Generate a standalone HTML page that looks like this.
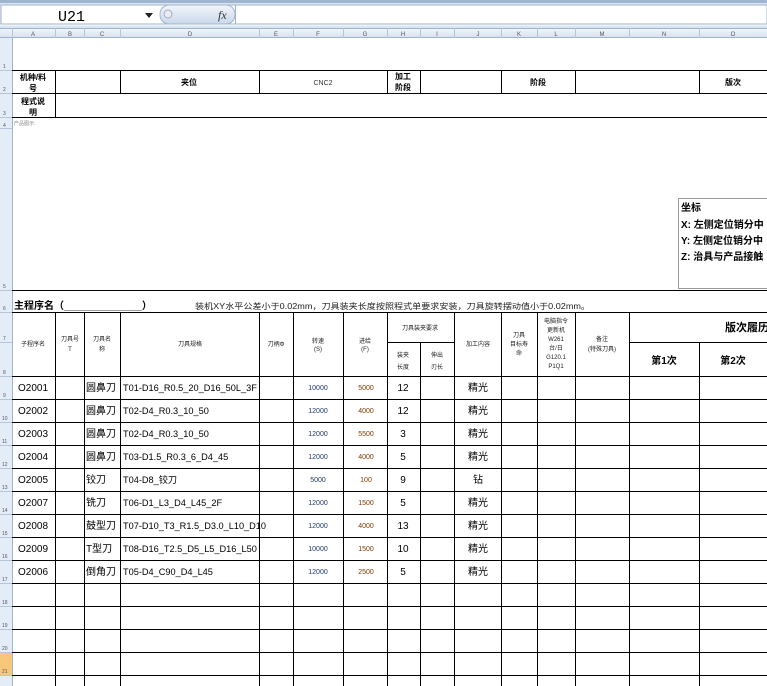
<!DOCTYPE html>
<html><head><meta charset="utf-8"><style>
body{margin:0;width:767px;height:686px;overflow:hidden;background:#fff;font-family:"Liberation Sans","Noto Sans CJK SC",sans-serif}
svg{position:absolute;left:0;top:0}
</style></head><body>
<svg width="767" height="686" xmlns="http://www.w3.org/2000/svg" font-family="Liberation Sans, Noto Sans CJK SC, sans-serif">
<defs><linearGradient id="hg" x1="0" y1="0" x2="0" y2="1"><stop offset="0" stop-color="#f4f7fb"/><stop offset="1" stop-color="#d5dfec"/></linearGradient>
<linearGradient id="fx" x1="0" y1="0" x2="0" y2="1"><stop offset="0" stop-color="#f2f6fb"/><stop offset="1" stop-color="#c9d8ea"/></linearGradient></defs>
<rect x="0" y="0" width="767" height="28" fill="#dbe5f1"/>
<rect x="0" y="0" width="767" height="3" fill="#9fb4cf"/>
<rect x="1" y="5" width="766" height="19" fill="#fff" stroke="#9fb4cf"/>
<line x1="0" y1="25" x2="767" y2="25" stroke="#fff"/>
<text x="58" y="21" font-size="15" font-family="Liberation Mono, monospace">U21</text>
<path d="M145 13 h8 l-4 5z" fill="#222"/>
<rect x="160" y="5" width="75" height="19" rx="9" fill="url(#fx)" stroke="#9fb4cf"/>
<rect x="235" y="5" width="1" height="19" fill="#9fb4cf"/>
<circle cx="168" cy="14" r="4" fill="#e6ecf4" stroke="#aab"/>
<text x="218" y="19" font-size="12" font-style="italic" font-family="Liberation Serif, serif" fill="#333">fx</text>
<rect x="0" y="28" width="767" height="10" fill="url(#hg)"/>
<line x1="0" y1="28.5" x2="767" y2="28.5" stroke="#9fb4cf"/>
<line x1="0" y1="37.5" x2="767" y2="37.5" stroke="#9fb4cf"/>
<path d="M12.5 28v10M55.5 28v10M84.5 28v10M120.5 28v10M259.5 28v10M293.5 28v10M343.5 28v10M387.5 28v10M420.5 28v10M454.5 28v10M501.5 28v10M537.5 28v10M575.5 28v10M629.5 28v10M699.5 28v10" stroke="#b6c6da"/>
<g font-size="6" fill="#556" text-anchor="middle">
<text x="33" y="36">A</text><text x="70" y="36">B</text><text x="102" y="36">C</text><text x="190" y="36">D</text><text x="276" y="36">E</text><text x="318" y="36">F</text><text x="365" y="36">G</text><text x="403" y="36">H</text><text x="437" y="36">I</text><text x="478" y="36">J</text><text x="519" y="36">K</text><text x="556" y="36">L</text><text x="602" y="36">M</text><text x="664" y="36">N</text><text x="733" y="36">O</text></g>
<rect x="0" y="38" width="12" height="648" fill="#e4ecf7"/>
<rect x="0" y="652" width="12" height="23" fill="#f8c77c"/>
<line x1="12.5" y1="38" x2="12.5" y2="686" stroke="#9fb4cf"/>
<path d="M0 70.5h12M0 93.5h12M0 117.5h12M0 128.5h12M0 290.5h12M0 312.5h12M0 342.5h12M0 376.5h12M0 399.5h12M0 422.5h12M0 445.5h12M0 468.5h12M0 491.5h12M0 514.5h12M0 537.5h12M0 560.5h12M0 583.5h12M0 606.5h12M0 629.5h12M0 652.5h12M0 675.5h12" stroke="#b6c6da"/>
<g font-size="5" fill="#556">
<text x="3" y="68">1</text><text x="3" y="91">2</text><text x="3" y="115">3</text><text x="3" y="127">4</text><text x="3" y="288">5</text><text x="3" y="310">6</text><text x="3" y="340">7</text><text x="3" y="374">8</text><text x="3" y="397">9</text><text x="2" y="420">10</text><text x="2" y="443">11</text><text x="2" y="466">12</text><text x="2" y="489">13</text><text x="2" y="512">14</text><text x="2" y="535">15</text><text x="2" y="558">16</text><text x="2" y="581">17</text><text x="2" y="604">18</text><text x="2" y="627">19</text><text x="2" y="650">20</text><text x="2" y="673">21</text></g>
<g stroke="#000" stroke-width="1" fill="none">
<path d="M12 70.5H767M12 93.5H767M12 117.5H767M12 290.5H767M12 312.5H767M12 376.5H767M387 342.5H454M629 342.5H767"/>
<path d="M55.5 70v47M120.5 70v23M259.5 70v23M387.5 70v23M420.5 70v23M501.5 70v23M575.5 70v23M699.5 70v23"/>
<path d="M55.5 312V686M84.5 312V686M120.5 312V686M259.5 312V686M293.5 312V686M343.5 312V686M387.5 312V686M420.5 342V686M454.5 312V686M501.5 312V686M537.5 312V686M575.5 312V686M629.5 312V686M699.5 342V686"/>
<path d="M12 399.5H767M12 422.5H767M12 445.5H767M12 468.5H767M12 491.5H767M12 514.5H767M12 537.5H767M12 560.5H767M12 583.5H767M12 606.5H767M12 629.5H767M12 652.5H767M12 675.5H767"/>
</g>
<rect x="678.5" y="198.5" width="100" height="90" fill="#fff" stroke="#999"/>
<g font-size="10" font-weight="bold" fill="#000">
<text x="681" y="211">坐标</text>
<text x="681" y="228">X: 左侧定位销分中</text>
<text x="681" y="244">Y: 左侧定位销分中</text>
<text x="681" y="260">Z: 治具与产品接触</text></g>
<g font-size="8" font-weight="bold" text-anchor="middle">
<text x="33" y="80">机种/料</text><text x="33" y="91">号</text>
<text x="33" y="104">程式说</text><text x="33" y="115">明</text>
<text x="189" y="85">夹位</text>
<text x="403" y="79">加工</text><text x="403" y="90">阶段</text>
<text x="538" y="85">阶段</text>
<text x="733" y="85">版次</text></g>
<text x="323" y="85" font-size="7" text-anchor="middle" fill="#333">CNC2</text>
<text x="14" y="125" font-size="5" fill="#888">产品图示:</text>
<text x="14" y="309" font-size="10" font-weight="bold">主程序名（______________）</text>
<text x="195" y="309" font-size="8" fill="#222" textLength="395" lengthAdjust="spacingAndGlyphs">装机XY水平公差小于0.02mm，刀具装夹长度按照程式单要求安装，刀具旋转摆动值小于0.02mm。</text>
<g font-size="6" text-anchor="middle" fill="#222">
<text x="33" y="346">子程序名</text>
<text x="70" y="341">刀具号</text><text x="70" y="351">T</text>
<text x="102" y="341">刀具名</text><text x="102" y="351">称</text>
<text x="190" y="346">刀具规格</text>
<text x="276" y="346">刀柄Φ</text>
<text x="318" y="343">转速</text><text x="318" y="351">(S)</text>
<text x="365" y="343">进给</text><text x="365" y="351">(F)</text>
<text x="420" y="330">刀具装夹要求</text>
<text x="403" y="357">装夹</text><text x="403" y="369">长度</text>
<text x="437" y="357">伸出</text><text x="437" y="369">刃长</text>
<text x="478" y="346">加工内容</text>
<text x="519" y="337">刀具</text><text x="519" y="346">目标寿</text><text x="519" y="355">命</text>
<text x="556" y="323">电脑指令</text><text x="556" y="332">更新机</text><text x="556" y="341">W261</text><text x="556" y="350">台/日</text><text x="556" y="359">G120.1</text><text x="556" y="368">P1Q1</text>
<text x="602" y="341">备注</text><text x="602" y="351">(特殊刀具)</text></g>
<text x="725" y="331" font-size="11" font-weight="bold">版次履历</text>
<g font-size="10" font-weight="bold" text-anchor="middle"><text x="664" y="364">第1次</text><text x="733" y="364">第2次</text></g>
<g font-size="10" fill="#000">
<g text-anchor="middle">
<text x="33" y="391">O2001</text><text x="33" y="414">O2002</text><text x="33" y="437">O2003</text><text x="33" y="460">O2004</text><text x="33" y="483">O2005</text><text x="33" y="506">O2007</text><text x="33" y="529">O2008</text><text x="33" y="552">O2009</text><text x="33" y="575">O2006</text>
<text x="403" y="391">12</text><text x="403" y="414">12</text><text x="403" y="437">3</text><text x="403" y="460">5</text><text x="403" y="483">9</text><text x="403" y="506">5</text><text x="403" y="529">13</text><text x="403" y="552">10</text><text x="403" y="575">5</text>
<text x="478" y="391">精光</text><text x="478" y="414">精光</text><text x="478" y="437">精光</text><text x="478" y="460">精光</text><text x="478" y="483">钻</text><text x="478" y="506">精光</text><text x="478" y="529">精光</text><text x="478" y="552">精光</text><text x="478" y="575">精光</text></g>
<text x="86" y="391">圆鼻刀</text><text x="86" y="414">圆鼻刀</text><text x="86" y="437">圆鼻刀</text><text x="86" y="460">圆鼻刀</text><text x="86" y="483">铰刀</text><text x="86" y="506">铣刀</text><text x="86" y="529">鼓型刀</text><text x="86" y="552">T型刀</text><text x="86" y="575">倒角刀</text>
<g font-size="9.2">
<text x="123" y="391">T01-D16_R0.5_20_D16_50L_3F</text><text x="123" y="414">T02-D4_R0.3_10_50</text><text x="123" y="437">T02-D4_R0.3_10_50</text><text x="123" y="460">T03-D1.5_R0.3_6_D4_45</text><text x="123" y="483">T04-D8_铰刀</text><text x="123" y="506">T06-D1_L3_D4_L45_2F</text><text x="123" y="529">T07-D10_T3_R1.5_D3.0_L10_D10</text><text x="123" y="552">T08-D16_T2.5_D5_L5_D16_L50</text><text x="123" y="575">T05-D4_C90_D4_L45</text></g></g>
<g font-size="7" text-anchor="middle" fill="#1f3864">
<text x="318" y="390">10000</text><text x="318" y="413">12000</text><text x="318" y="436">12000</text><text x="318" y="459">12000</text><text x="318" y="482">5000</text><text x="318" y="505">12000</text><text x="318" y="528">12000</text><text x="318" y="551">10000</text><text x="318" y="574">12000</text></g>
<g font-size="7" text-anchor="middle" fill="#7a3b00">
<text x="366" y="390">5000</text><text x="366" y="413">4000</text><text x="366" y="436">5500</text><text x="366" y="459">4000</text><text x="366" y="482">100</text><text x="366" y="505">1500</text><text x="366" y="528">4000</text><text x="366" y="551">1500</text><text x="366" y="574">2500</text></g>
</svg>
</body></html>
